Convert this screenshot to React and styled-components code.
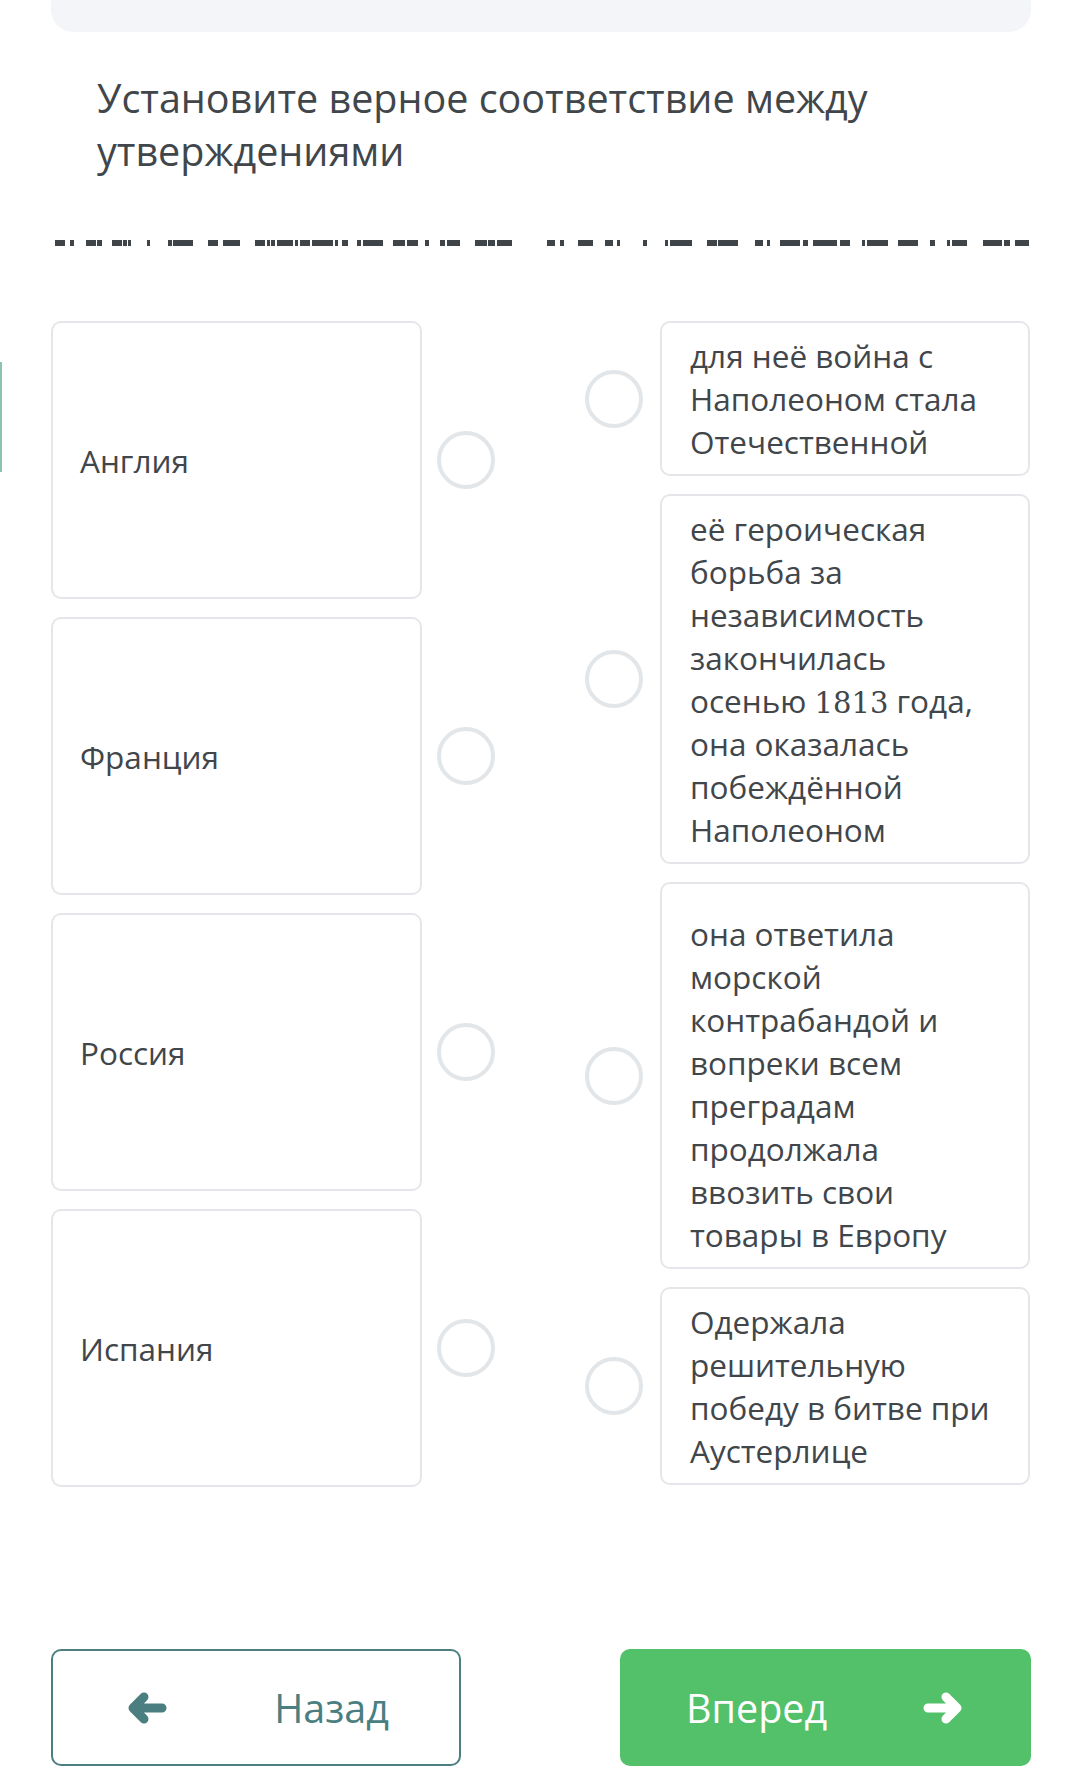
import styled, { createGlobalStyle } from "styled-components";

const GlobalStyle = createGlobalStyle`
  html, body {
    margin: 0;
    padding: 0;
    background: #ffffff;
  }
  body {
    font-family: "Open Sans", "Noto Sans", sans-serif;
    color: #3f4449;
  }
`;

const leftDashes = [
  [55, 65], [70, 74], [86, 96], [97, 102], [112, 122], [123, 127], [128, 131],
  [147, 150], [168, 172], [173, 193], [208, 218], [223, 240], [255, 265],
  [267, 270], [271, 275], [277, 293], [295, 298], [300, 310], [312, 333],
  [335, 338], [342, 348], [357, 361], [363, 383], [393, 405], [407, 418],
  [425, 429], [440, 445], [447, 460], [475, 487], [488, 495], [497, 512],
];

const rightDashes = [
  [547, 555], [560, 564], [578, 593], [605, 613], [617, 620], [643, 647],
  [665, 668], [670, 692], [707, 717], [718, 738], [755, 763], [767, 770],
  [780, 800], [803, 808], [813, 837], [840, 850], [862, 865], [867, 888],
  [898, 918], [930, 935], [947, 950], [952, 967], [983, 1002], [1004, 1010],
  [1015, 1029],
];

const leftItems = ["Англия", "Франция", "Россия", "Испания"];

function getRightItems() {
  return [
    { text: "для неё война с Наполеоном стала Отечественной" },
    {
      text: (
        <>
          её героическая борьба за независимость закончилась осенью{" "}
          <Year>1813</Year> года, она оказалась побеждённой Наполеоном
        </>
      ),
    },
    {
      text: "она ответила морской контрабандой и вопреки всем преградам продолжала ввозить свои товары в Европу",
      extraTop: 17,
    },
    { text: "Одержала решительную победу в битве при Аустерлице" },
  ];
}

function Arrow({ left }) {
  return (
    <ArrowIcon viewBox="0 0 40 34" width="40" height="34" $flip={!left}>
      <path
        d="M35 17 H7 M17 6 L6 17 L17 28"
        fill="none"
        stroke="currentColor"
        strokeWidth="9"
        strokeLinecap="round"
        strokeLinejoin="round"
      />
    </ArrowIcon>
  );
}

export default function App() {
  const rightItems = getRightItems();
  return (
    <>
      <GlobalStyle />
      <Page>
        <EdgeMark />
        <TopPanel />
        <Title>Установите верное соответствие между утверждениями</Title>
        <DashLine viewBox="0 0 1080 8" width="1080" height="8">
          {[...leftDashes, ...rightDashes].map(([a, b], i) => (
            <rect key={i} x={a} y="1" width={b - a} height="6" fill="#3f4449" />
          ))}
        </DashLine>
        <Columns>
          <Column>
            {leftItems.map((item) => (
              <LeftRow key={item}>
                <LeftCard>{item}</LeftCard>
                <Dot />
              </LeftRow>
            ))}
          </Column>
          <Column>
            {rightItems.map((item, i) => (
              <RightRow key={i}>
                <Dot />
                <RightCard $extraTop={item.extraTop || 0}>{item.text}</RightCard>
              </RightRow>
            ))}
          </Column>
        </Columns>
        <Footer>
          <BackButton>
            <Arrow left />
            <span>Назад</span>
          </BackButton>
          <NextButton>
            <span>Вперед</span>
            <Arrow />
          </NextButton>
        </Footer>
      </Page>
    </>
  );
}

const Page = styled.div`
  position: relative;
  width: 1080px;
  height: 1782px;
  overflow: hidden;
  display: flex;
  flex-direction: column;
`;

const EdgeMark = styled.div`
  position: absolute;
  left: 0;
  top: 362px;
  width: 2px;
  height: 110px;
  background: #8cc3ad;
`;

const TopPanel = styled.div`
  margin: 0 49px 0 51px;
  height: 32px;
  background: #f4f5f8;
  border-radius: 0 0 22px 22px;
`;

const Title = styled.h1`
  margin: 40px 120px 0 97px;
  font-size: 39.5px;
  line-height: 53px;
  font-weight: 400;
  color: #41464b;
`;

const DashLine = styled.svg`
  display: block;
  margin-top: 61px;
`;

const Columns = styled.div`
  display: grid;
  grid-template-columns: 444px 445px;
  column-gap: 90px;
  margin: 74px 0 0 51px;
`;

const Column = styled.div`
  display: flex;
  flex-direction: column;
  gap: 18px;
`;

const LeftRow = styled.div`
  display: flex;
  align-items: center;
  gap: 15px;
`;

const RightRow = styled.div`
  display: flex;
  align-items: center;
  gap: 17px;
`;

const Card = styled.div`
  box-sizing: border-box;
  border: 2px solid #e4e6e9;
  border-radius: 10px;
  background: #ffffff;
  font-size: 31.5px;
  line-height: 43px;
  color: #41464b;
`;

const LeftCard = styled(Card)`
  width: 371px;
  height: 278px;
  display: flex;
  align-items: center;
  padding: 0 20px 0 27px;
`;

const RightCard = styled(Card)`
  width: 370px;
  padding: ${(p) => 11 + p.$extraTop}px 18px 11px 28px;
`;

const Year = styled.span`
  font-family: "DejaVu Serif", "Liberation Serif", serif;
  font-size: 29px;
  line-height: 1;
`;

const Dot = styled.div`
  box-sizing: border-box;
  flex: none;
  width: 58px;
  height: 58px;
  border-radius: 50%;
  border: 4px solid #e2e6e9;
`;

const Footer = styled.div`
  display: flex;
  justify-content: space-between;
  margin: 162px 49px 0 51px;
`;

const Button = styled.button`
  box-sizing: border-box;
  width: 410px;
  height: 117px;
  border-radius: 10px;
  display: flex;
  align-items: center;
  justify-content: space-between;
  font-family: "Open Sans", "Noto Sans", sans-serif;
  font-size: 39.5px;
  cursor: pointer;
`;

const ArrowIcon = styled.svg`
  flex: none;
  transform: ${(p) => (p.$flip ? "scaleX(-1)" : "none")};
`;

const BackButton = styled(Button)`
  padding: 0 70px 0 74px;
  background: #ffffff;
  border: 2px solid #4d7f82;
  color: #4a7e80;
`;

const NextButton = styled(Button)`
  width: 411px;
  padding: 0 68px 0 66px;
  background: #52c169;
  border: none;
  color: #ffffff;
`;
